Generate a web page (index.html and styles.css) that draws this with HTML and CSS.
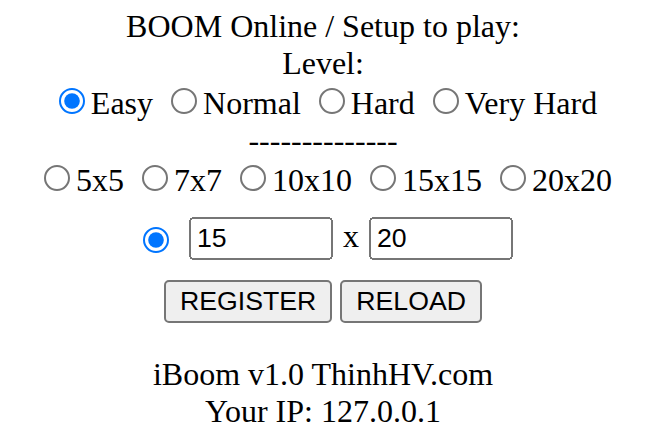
FILE: index.html
```html
<!DOCTYPE html>
<html>
<head>
<meta charset="utf-8">
<title>BOOM Online</title>
<link rel="stylesheet" href="styles.css">
</head>
<body>
<div class="page">
  <form class="setup">
    BOOM Online / Setup to play:<br>
    Level:<br>
    <input type="radio" name="level" checked>Easy
    <input type="radio" name="level">Normal
    <input type="radio" name="level">Hard
    <input type="radio" name="level">Very Hard<br>
    --------------<br>
    <input type="radio" name="size">5x5
    <input type="radio" name="size">7x7
    <input type="radio" name="size">10x10
    <input type="radio" name="size">15x15
    <input type="radio" name="size">20x20<br>
    <div class="custom">
      <input type="radio" name="size" class="custom-radio" checked>
      <input type="text" class="dim" value="15"><span class="times">x</span><input type="text" class="dim" value="20">
    </div>
    <div class="actions">
      <button type="button" class="btn">REGISTER</button> <button type="button" class="btn">RELOAD</button>
    </div>
    <div class="footer">
      iBoom v1.0 ThinhHV.com<br>
      Your IP: 127.0.0.1
    </div>
  </form>
</div>
</body>
</html>
```

FILE: styles.css
```css
body {
  margin: 8px;
  background: #ffffff;
}

.page {
  zoom: 2;
  padding-right: 3px;
  font-family: "Liberation Serif", "Times New Roman", serif;
  font-size: 16px;
  color: #000000;
  text-align: center;
}

.setup {
  margin: 0;
}

.custom {
  margin-top: 9px;
}

.custom-radio {
  margin-right: 6px;
  vertical-align: -3px;
}

.times {
  margin: 0 5px;
}

.dim {
  font-family: "Liberation Sans", Arial, sans-serif;
  font-size: 13.333px;
  width: 64px;
  padding: 1px 2px;
}

.actions {
  margin-top: 10px;
}

.btn {
  font-family: "Liberation Sans", Arial, sans-serif;
  font-size: 13.333px;
  padding: 1px 6px;
}

.footer {
  margin-top: 16.5px;
}
```
